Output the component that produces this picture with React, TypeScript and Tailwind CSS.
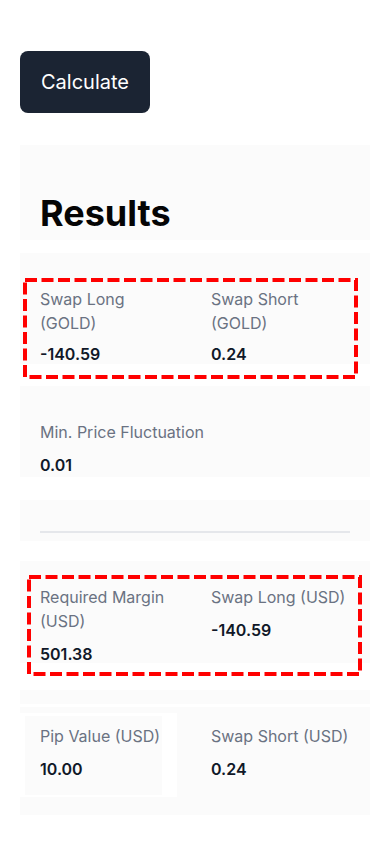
import React from "react";

const PANEL = "bg-[#fbfbfb]";

function Item({ label, value, gap = "mt-[11px]" }: { label: string; value: string; gap?: string }) {
  return (
    <div>
      <div className="text-base leading-6 text-gray-500">{label}</div>
      <div className={`text-base leading-5 font-semibold text-gray-900 ${gap}`}>{value}</div>
    </div>
  );
}

function DashBox({ className }: { className: string }) {
  return (
    <svg className={`pointer-events-none absolute ${className}`} width="335" height="101" viewBox="0 0 335 101">
      <rect x="2" y="2" width="331" height="97" fill="none" stroke="#ff0000" strokeWidth="4" strokeDasharray="12 4.5" />
    </svg>
  );
}

export default function App() {
  return (
    <div className="min-h-[844px] bg-white px-5 pt-[51px]" style={{ fontFamily: "Inter, 'Noto Sans', sans-serif" }}>
      <button className="h-[62px] w-[130px] rounded-lg bg-[#1b2433] text-xl text-white">Calculate</button>

      <div className={`mt-8 ${PANEL} px-5 pt-[48px] pb-[7px]`}>
        <h2 className="text-4xl leading-10 font-bold text-[#050505]">Results</h2>
      </div>

      <div className={`relative mt-[13px] ${PANEL} px-5 pt-[34px]`}>
        <div className="grid grid-cols-2 gap-x-8">
          <Item label="Swap Long (GOLD)" value="-140.59" gap="mt-[9px]" />
          <Item label="Swap Short (GOLD)" value="0.24" gap="mt-[9px]" />
        </div>
        <DashBox className="left-[3px] top-[25px]" />
      </div>

      <div className={`mt-[22px] ${PANEL} px-5 pt-[34px] pb-[2px]`}>
        <Item label="Min. Price Fluctuation" value="0.01" />
      </div>

      <div className={`mt-[23px] ${PANEL} px-5 pt-[31px] pb-[8px]`}>
        <div className="h-[2px] bg-[#e5e7eb]" />
      </div>

      <div className={`relative mt-[20px] h-[102px] ${PANEL} px-5 pt-[24px]`}>
        <div className="grid grid-cols-2 gap-x-8">
          <Item label="Required Margin (USD)" value="501.38" />
          <Item label="Swap Long (USD)" value="-140.59" />
        </div>
        <DashBox className="left-[7px] top-[14px]" />
      </div>

      <div className={`mt-[27px] h-[14px] ${PANEL}`} />

      <div className={`mt-[3px] h-[108px] ${PANEL} pt-[6px]`}>
        <div className="flex">
          <div className="h-[84px] w-[157px] bg-white pl-[5px] pt-[3px]">
            <div className={`h-[79px] w-[137px] ${PANEL} pl-[15px] pt-[8px]`}>
              <Item label="Pip Value (USD)" value="10.00" />
            </div>
          </div>
          <div className="ml-[34px] pt-[11px]">
            <Item label="Swap Short (USD)" value="0.24" />
          </div>
        </div>
      </div>
    </div>
  );
}
